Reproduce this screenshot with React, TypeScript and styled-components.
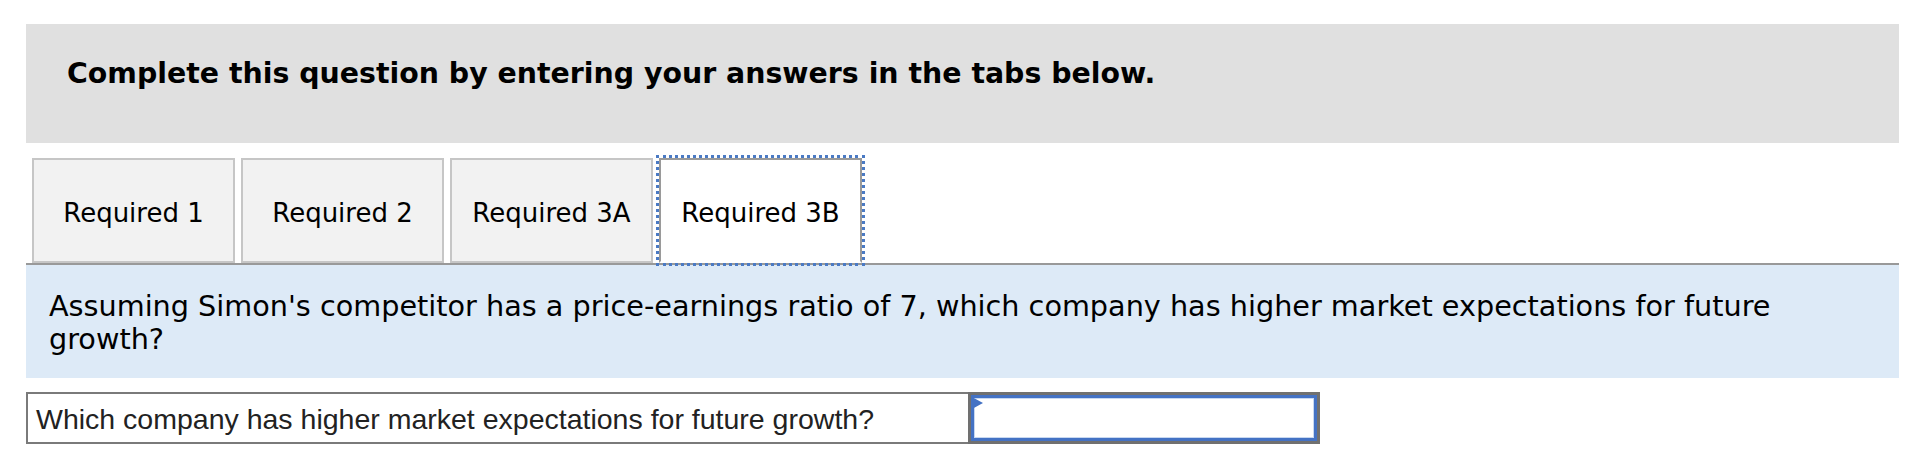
import React from 'react';
import styled, { createGlobalStyle } from 'styled-components';

const GlobalStyle = createGlobalStyle`
    html, body {
        margin: 0;
        padding: 0;
        background: #ffffff;
    }
`;

const Wrapper = styled.div`
    padding: 24px 19px 0 26px;
    font-family: 'DejaVu Sans', Verdana, sans-serif;
    color: #000000;
`;

const Instructions = styled.div`
    box-sizing: border-box;
    background: #e0e0e0;
    height: 119px;
    padding: 33px 0 0 41px;
    font-weight: bold;
    font-size: 28.4px;
`;

const TabList = styled.div`
    display: flex;
    gap: 6px;
    margin-top: 15px;
    padding-left: 6px;
    border-bottom: 2px solid #999999;
`;

const Tab = styled.div<{ $active?: boolean }>`
    box-sizing: border-box;
    width: 203px;
    height: 105px;
    padding-top: 5px;
    display: flex;
    align-items: center;
    justify-content: center;
    font-size: 26px;
    background: ${p => (p.$active ? '#ffffff' : '#f2f2f2')};
    border: 2px solid ${p => (p.$active ? '#9a9a9a' : '#c6c6c6')};
    border-bottom-color: ${p => (p.$active ? '#ffffff' : '#c6c6c6')};
    outline: ${p => (p.$active ? '3px dotted #4a7ac4' : 'none')};
    outline-offset: 0;
`;

const Prompt = styled.div`
    background: #ddeaf7;
    padding: 25px 23px 22px 23px;
    font-size: 28.7px;
    line-height: 33px;
`;

const AnswerRow = styled.div`
    display: flex;
    margin-top: 14px;
    height: 52px;
`;

const LabelCell = styled.div`
    box-sizing: border-box;
    width: 942px;
    border: 2px solid #7a7a7a;
    border-right: none;
    display: flex;
    align-items: center;
    padding: 3px 0 0 8px;
    font-family: 'Liberation Sans', Arial, sans-serif;
    font-size: 28.5px;
    color: #222222;
`;

const InputCell = styled.div`
    position: relative;
    box-sizing: border-box;
    width: 352px;
    border: 3px solid #707070;
    background: #ffffff;
`;

const InputBox = styled.div`
    box-sizing: border-box;
    height: 100%;
    border: 3px solid #4472c4;
    box-shadow: inset 0 0 0 1px #c8d8f0;
`;

const Marker = styled.span`
    position: absolute;
    left: 1px;
    top: 2px;
    width: 0;
    height: 0;
    border-top: 6px solid transparent;
    border-bottom: 6px solid transparent;
    border-left: 11px solid #4472c4;
`;

const tabs = ['Required 1', 'Required 2', 'Required 3A', 'Required 3B'];

const App: React.FunctionComponent = () => {
    const aktivTab = 3;

    return (
        <>
            <GlobalStyle />
            <Wrapper>
                <Instructions>Complete this question by entering your answers in the tabs below.</Instructions>
                <TabList>
                    {tabs.map((tab, i) => (
                        <Tab key={tab} $active={i === aktivTab}>
                            {tab}
                        </Tab>
                    ))}
                </TabList>
                <Prompt>
                    Assuming Simon's competitor has a price-earnings ratio of 7, which company has higher
                    market expectations for future growth?
                </Prompt>
                <AnswerRow>
                    <LabelCell>Which company has higher market expectations for future growth?</LabelCell>
                    <InputCell>
                        <InputBox />
                        <Marker />
                    </InputCell>
                </AnswerRow>
            </Wrapper>
        </>
    );
};

export default App;
